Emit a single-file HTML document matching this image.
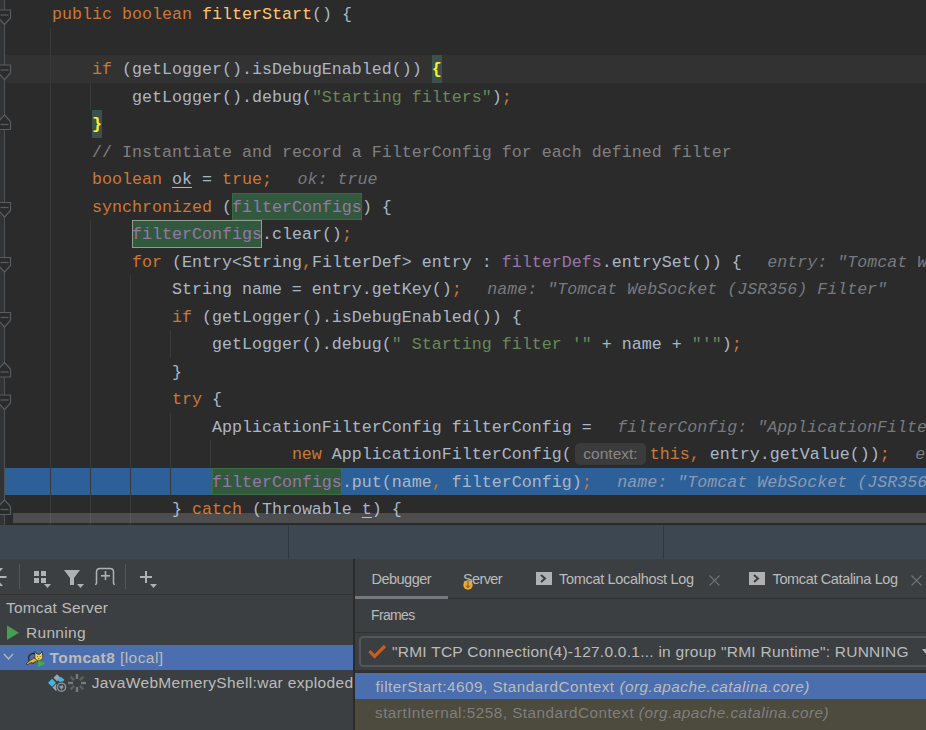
<!DOCTYPE html>
<html><head><meta charset="utf-8">
<style>
*{margin:0;padding:0;box-sizing:border-box}
html,body{width:926px;height:730px;overflow:hidden;background:#2b2b2b}
body{position:relative;font-family:"Liberation Sans",sans-serif}
.abs{position:absolute}
#ed{position:absolute;left:0;top:0;width:926px;height:525px;background:#2b2b2b;overflow:hidden}
.ln{position:absolute;left:12px;height:27.5px;line-height:27.5px;white-space:pre;font-family:"Liberation Mono",monospace;font-size:16.667px;color:#a9b7c6;padding-top:1.2px}
.k{color:#cc7832}
.s{color:#6a8759}
.c{color:#808080}
.f{color:#9876aa}
.y{color:#ffc66d}
.u{text-decoration:underline;text-underline-offset:3px}
.bm{color:#ffef28;font-weight:bold}
.h{color:#767a7f;font-style:italic;margin-left:25.5px}
.pbox{position:absolute;line-height:21.5px;text-align:center;background:#3b3b3b;border-radius:5px;font-family:"Liberation Sans",sans-serif;font-size:15.5px;color:#878787}
.gap{display:inline-block;width:78px}
.tree{position:absolute;height:25px;line-height:25px;font-size:15px;color:#bbbbbb;white-space:pre}
.tab{position:absolute;top:565px;height:28px;line-height:28px;font-size:14.5px;color:#bbbbbb;white-space:pre}
.frm{position:absolute;height:26px;line-height:26px;font-size:15px;white-space:pre}
.ig{position:absolute;width:1px;background:#393939}
</style></head><body>
<div id="ed">
<div class="abs" style="left:0;top:0;width:4px;height:525px;background:#313335"></div>
<div class="abs" style="left:5px;top:55px;width:921px;height:27.5px;background:#323232"></div>
<div class="abs" style="left:5px;top:467.5px;width:921px;height:27.5px;background:#2d6099"></div>
<div class="ig" style="left:50px;top:27.5px;height:500.5px"></div>
<div class="ig" style="left:90px;top:82.5px;height:27.5px"></div>
<div class="ig" style="left:90px;top:220.0px;height:308.0px"></div>
<div class="ig" style="left:130px;top:275.0px;height:252.99999999999997px"></div>
<div class="ig" style="left:170px;top:330.0px;height:27.5px"></div>
<div class="ig" style="left:170px;top:412.5px;height:82.5px"></div>
<div class="ig" style="left:210px;top:440.0px;height:27.5px"></div>
<div class="abs" style="left:432px;top:55.0px;width:10px;height:27.5px;background:#3b514d"></div>
<div class="abs" style="left:92px;top:110.0px;width:10px;height:27.5px;background:#3b514d"></div>
<div class="abs" style="left:232px;top:192.5px;width:130px;height:27.5px;background:#32593d;border:1px solid #3a6843"></div>
<div class="abs" style="left:132px;top:220.0px;width:130px;height:27.5px;background:#32593d;border:1px solid #8fa08f"></div>
<div class="abs" style="left:212px;top:467.5px;width:130px;height:27.5px;background:#32593d;border:1px solid #3a7040"></div>
<div class="pbox" style="left:575px;top:443px;width:71px;height:21.5px">context:</div>
<div class="abs" style="left:4px;top:0;width:1px;height:525px;background:#4f5152"></div>
<svg class="abs" style="left:0;top:0" width="14" height="525" viewBox="0 0 14 525"><path d="M-1.5 10.0 L10.5 10.0 L10.5 18.0 L4.5 24.5 L-1.5 18.0 Z" fill="#2b2b2b" stroke="#5a5d5f" stroke-width="1.2"/><path d="M0.5 15.0 L8.5 15.0" stroke="#5a5d5f" stroke-width="1.2"/><path d="M-1.5 65.0 L10.5 65.0 L10.5 73.0 L4.5 79.5 L-1.5 73.0 Z" fill="#2b2b2b" stroke="#5a5d5f" stroke-width="1.2"/><path d="M0.5 70.0 L8.5 70.0" stroke="#5a5d5f" stroke-width="1.2"/><path d="M-1.5 202.5 L10.5 202.5 L10.5 210.5 L4.5 217.0 L-1.5 210.5 Z" fill="#2b2b2b" stroke="#5a5d5f" stroke-width="1.2"/><path d="M0.5 207.5 L8.5 207.5" stroke="#5a5d5f" stroke-width="1.2"/><path d="M-1.5 257.5 L10.5 257.5 L10.5 265.5 L4.5 272.0 L-1.5 265.5 Z" fill="#2b2b2b" stroke="#5a5d5f" stroke-width="1.2"/><path d="M0.5 262.5 L8.5 262.5" stroke="#5a5d5f" stroke-width="1.2"/><path d="M-1.5 312.5 L10.5 312.5 L10.5 320.5 L4.5 327.0 L-1.5 320.5 Z" fill="#2b2b2b" stroke="#5a5d5f" stroke-width="1.2"/><path d="M0.5 317.5 L8.5 317.5" stroke="#5a5d5f" stroke-width="1.2"/><path d="M-1.5 395.0 L10.5 395.0 L10.5 403.0 L4.5 409.5 L-1.5 403.0 Z" fill="#2b2b2b" stroke="#5a5d5f" stroke-width="1.2"/><path d="M0.5 400.0 L8.5 400.0" stroke="#5a5d5f" stroke-width="1.2"/><path d="M-1.5 129.5 L10.5 129.5 L10.5 121.5 L4.5 115.0 L-1.5 121.5 Z" fill="#2b2b2b" stroke="#5a5d5f" stroke-width="1.2"/><path d="M0.5 124.5 L8.5 124.5" stroke="#5a5d5f" stroke-width="1.2"/><path d="M-1.5 377.0 L10.5 377.0 L10.5 369.0 L4.5 362.5 L-1.5 369.0 Z" fill="#2b2b2b" stroke="#5a5d5f" stroke-width="1.2"/><path d="M0.5 372.0 L8.5 372.0" stroke="#5a5d5f" stroke-width="1.2"/><path d="M-1.5 514.5 L10.5 514.5 L10.5 506.5 L4.5 500.0 L-1.5 506.5 Z" fill="#2b2b2b" stroke="#5a5d5f" stroke-width="1.2"/><path d="M0.5 509.5 L8.5 509.5" stroke="#5a5d5f" stroke-width="1.2"/></svg>

<div class="ln" style="top:0.0px">    <span class="k">public</span> <span class="k">boolean</span> <span class="y">filterStart</span>() {</div>
<div class="ln" style="top:55.0px">        <span class="k">if</span> (getLogger().isDebugEnabled()) <span class="bm">{</span></div>
<div class="ln" style="top:82.5px">            getLogger().debug(<span class="s">&quot;Starting filters&quot;</span>)<span class="k">;</span></div>
<div class="ln" style="top:110.0px">        <span class="bm">}</span></div>
<div class="ln" style="top:137.5px">        <span class="c">// Instantiate and record a FilterConfig for each defined filter</span></div>
<div class="ln" style="top:165.0px">        <span class="k">boolean</span> <span class="u">ok</span> = <span class="k">true;</span><span class="h">ok: true</span></div>
<div class="ln" style="top:192.5px">        <span class="k">synchronized</span> (<span class="f">filterConfigs</span>) {</div>
<div class="ln" style="top:220.0px">            <span class="f">filterConfigs</span>.clear()<span class="k">;</span></div>
<div class="ln" style="top:247.5px">            <span class="k">for</span> (Entry&lt;String<span class="k">,</span>FilterDef&gt; entry : <span class="f">filterDefs</span>.entrySet()) {<span class="h">entry: &quot;Tomcat WebSocket (JSR356) Filter&quot;</span></div>
<div class="ln" style="top:275.0px">                String name = entry.getKey()<span class="k">;</span><span class="h">name: &quot;Tomcat WebSocket (JSR356) Filter&quot;</span></div>
<div class="ln" style="top:302.5px">                <span class="k">if</span> (getLogger().isDebugEnabled()) {</div>
<div class="ln" style="top:330.0px">                    getLogger().debug(<span class="s">&quot; Starting filter &#39;&quot;</span> + name + <span class="s">&quot;&#39;&quot;</span>)<span class="k">;</span></div>
<div class="ln" style="top:357.5px">                }</div>
<div class="ln" style="top:385.0px">                <span class="k">try</span> {</div>
<div class="ln" style="top:412.5px">                    ApplicationFilterConfig filterConfig =<span class="h">filterConfig: &quot;ApplicationFilterConfig[name=Tomcat]&quot;</span></div>
<div class="ln" style="top:440.0px">                            <span class="k">new</span> ApplicationFilterConfig(<span class="gap"></span><span class="k">this,</span> entry.getValue())<span class="k">;</span><span class="h">entry: &quot;Tomcat&quot;</span></div>
<div class="ln" style="top:467.5px">                    <span class="f">filterConfigs</span>.put(name<span class="k">,</span> filterConfig)<span class="k">;</span><span class="h" style="color:#8a9ab0">name: &quot;Tomcat WebSocket (JSR356) Filter&quot;</span></div>
<div class="ln" style="top:495.0px">                } <span class="k">catch</span> (Throwable <span class="u">t</span>) {</div>
<div class="abs" style="left:13px;top:513px;width:913px;height:10px;background:rgba(255,255,255,0.165)"></div>
</div>

<!-- band -->
<div class="abs" style="left:0;top:525px;width:926px;height:34px;background:#3c4752"></div>
<div class="abs" style="left:288px;top:525px;width:1px;height:34px;background:#2f3840"></div>
<div class="abs" style="left:663px;top:525px;width:1px;height:34px;background:#2f3840"></div>

<!-- left panel -->
<div class="abs" style="left:0;top:559px;width:353px;height:171px;background:#3c3f41"></div>
<div class="abs" style="left:0;top:594px;width:353px;height:1px;background:#323232"></div>
<div class="abs" style="left:353px;top:559px;width:2px;height:171px;background:#2b2b2b"></div>
<!-- toolbar icons -->
<svg class="abs" style="left:0;top:559px" width="353" height="35" viewBox="0 0 353 35">
  <g fill="#afb1b3">
    <rect x="0" y="17" width="6.5" height="2"/>
    <path d="M-4 9 L3 9 L-0.5 13 Z"/>
    <path d="M-4 27 L3 27 L-0.5 23 Z"/>
    <rect x="34" y="12" width="5" height="5"/><rect x="41" y="12" width="5" height="5"/>
    <rect x="34" y="19" width="5" height="5"/><rect x="41" y="19" width="5" height="5"/>
    <path d="M44 25 L51 25 L47.5 29 Z"/>
    <path d="M64 11 L80 11 L74 19 L74 26 L70 26 L70 19 Z"/>
    <path d="M77 25 L84 25 L80.5 29 Z"/>
    <rect x="140" y="17" width="12" height="2"/><rect x="145" y="12" width="2" height="12"/>
    <path d="M150 25 L157 25 L153.5 29 Z"/>
  </g>
  <g fill="none" stroke="#afb1b3" stroke-width="1.5">
    <path d="M95.5 26 L96.5 24 L96.5 13 Q96.5 9.5 100 9.5 L110 9.5 Q113.5 9.5 113.5 13 L113.5 24 L114.5 26"/>
  </g>
  <g fill="#afb1b3"><rect x="101" y="16" width="9" height="1.6"/><rect x="104.7" y="12" width="1.6" height="9"/></g>
  <rect x="19" y="5" width="1" height="25" fill="#555759"/>
  <rect x="125" y="5" width="1" height="25" fill="#555759"/>
</svg>
<div class="abs" style="left:0;top:645px;width:353px;height:25px;background:#4b6eaf"></div>
<div class="tree" id="t_ts" style="left:6.0px;top:595px;font-size:15.5px;letter-spacing:0.167px">Tomcat Server</div>
<svg class="abs" style="left:7px;top:625px" width="13" height="16"><path d="M0 0.5 L12 7.7 L0 15 Z" fill="#499c54"/></svg>
<div class="tree" id="t_run" style="left:26.0px;top:620px;font-size:15.5px;letter-spacing:0.3px">Running</div>
<svg class="abs" style="left:3px;top:652px" width="12" height="10"><path d="M1 2 L5.5 7 L10 2" fill="none" stroke="#b4b8bc" stroke-width="1.3"/></svg>
<svg class="abs" style="left:24px;top:649px" width="24" height="20" viewBox="24 649 24 20">
  <path d="M29 661 Q27.5 655 32 653.5 Q34 653 35 654" fill="none" stroke="#1e1e1e" stroke-width="1.1"/>
  <path d="M38.5 657.5 Q33 657.5 30 660.5 L26 663.8 L27.5 664.6 Q30 663 32 662.5 L33 664 L34 662 Q37 662 39 661 Z" fill="#eab52a" stroke="#1e1e1e" stroke-width="0.7"/>
  <path d="M35 651.5 L37.2 654.2 L40 654.2 L42.3 651.5 L42.8 657.5 Q42 660.8 38.7 660.8 Q35.5 660.8 34.8 657.5 Z" fill="#f4cf55" stroke="#1e1e1e" stroke-width="0.7"/>
  <path d="M37 656.5 L37.8 656.5 M39.8 656.5 L40.6 656.5 M38.2 658.8 L39.4 658.8" stroke="#1e1e1e" stroke-width="0.8"/>
  <path d="M38 659.8 L45.3 663.5 L38 667.2 Z" fill="#3fae49"/>
</svg>
<div class="tree" id="t_t8" style="left:49.5px;top:645px;font-size:15.5px;letter-spacing:0.443px"><b>Tomcat8</b> [local]</div>
<svg class="abs" style="left:46px;top:672px" width="42" height="23" viewBox="46 672 42 23">
  <path d="M53.5 677.8 L57 674.3 L60.5 677.8 L57 681.3 Z" fill="#9aa7b0"/>
  <path d="M48 682.7 L52 678.7 L56 682.7 L52 686.7 Z" fill="#40b6e0"/>
  <path d="M57.5 680 L61 676.8 L64.5 680 L61 683.2 Z" fill="#40b6e0"/>
  <path d="M52.5 687.5 L56 684 L59.5 687.5 L56 691 Z" fill="#9aa7b0"/>
  <circle cx="61.5" cy="687.2" r="5.6" fill="#3c3f41"/>
  <circle cx="61.5" cy="687.2" r="4.8" fill="#8e9aa2"/>
  <circle cx="61.5" cy="687.2" r="3.4" fill="#3c3f41"/>
  <path d="M59 686.8 L62.5 684.8 L63.5 687.5 L61.5 689.8 Z" fill="#8e9aa2"/>
  <g stroke-width="2.4" stroke-linecap="butt">
    <path d="M77 674 L77 679" stroke="#77797b"/>
    <path d="M83.4 676.6 L79.9 680.1" stroke="#5d6062"/>
    <path d="M86 683 L81 683" stroke="#77797b"/>
    <path d="M83.4 689.4 L79.9 685.9" stroke="#5d6062"/>
    <path d="M77 692 L77 687" stroke="#77797b"/>
    <path d="M70.6 689.4 L74.1 685.9" stroke="#5d6062"/>
    <path d="M68 683 L73 683" stroke="#77797b"/>
    <path d="M70.6 676.6 L74.1 680.1" stroke="#5d6062"/>
  </g>
</svg>
<div class="tree" id="t_java" style="left:91.7px;top:669.5px;width:261.3px;overflow:hidden;font-size:15.5px;letter-spacing:0.335px">JavaWebMemeryShell:war exploded</div>

<!-- right panel -->
<div class="abs" style="left:355px;top:559px;width:571px;height:171px;background:#3c3f41"></div>
<div class="abs" style="left:355px;top:598px;width:571px;height:1px;background:#323232"></div>
<div class="abs" style="left:355px;top:596px;width:93px;height:3px;background:#747a80"></div>
<div class="tab" id="t_dbg" style="left:371.5px;font-size:14.5px;letter-spacing:-0.515px">Debugger</div>
<div class="tab" id="t_srv" style="left:463.0px;font-size:14.5px;letter-spacing:-0.64px">Server</div>
<svg class="abs" style="left:461.6px;top:578.8px" width="12" height="12"><circle cx="6" cy="6" r="4.7" fill="#eeaa35"/><path d="M6 2.2 L6 8.5 M3.8 6.5 L6 8.7 L8.2 6.5" fill="none" stroke="#5a4a2a" stroke-width="0.9"/></svg>
<svg class="abs" style="left:536px;top:572px" width="16" height="13"><rect width="16" height="13" fill="#afb1b3"/><path d="M5 3 L9 6.5 L5 10" fill="none" stroke="#3c3f41" stroke-width="2"/></svg>
<div class="tab" id="t_loc" style="left:559.0px;font-size:14.5px;letter-spacing:-0.316px">Tomcat Localhost Log</div>
<svg class="abs" style="left:709px;top:575px" width="11" height="11"><path d="M0.5 0.5 L10.5 10.5 M10.5 0.5 L0.5 10.5" stroke="#6e7072" stroke-width="1.2"/></svg>
<svg class="abs" style="left:749px;top:572px" width="16" height="13"><rect width="16" height="13" fill="#afb1b3"/><path d="M5 3 L9 6.5 L5 10" fill="none" stroke="#3c3f41" stroke-width="2"/></svg>
<div class="tab" id="t_cat" style="left:772.5px;font-size:14.5px;letter-spacing:-0.365px">Tomcat Catalina Log</div>
<svg class="abs" style="left:911px;top:575px" width="11" height="11"><path d="M0.5 0.5 L10.5 10.5 M10.5 0.5 L0.5 10.5" stroke="#6e7072" stroke-width="1.2"/></svg>

<div class="tab" id="t_frm" style="left:371.0px;top:601.3px;font-size:14px;letter-spacing:-0.64px">Frames</div>
<div class="abs" style="left:355px;top:632px;width:571px;height:1px;background:#323232"></div>
<div class="abs" style="left:358.5px;top:636px;width:580px;height:31px;border:2px solid #545759;border-radius:4.5px;background:#3c3f41"></div>
<svg class="abs" style="left:367px;top:643px" width="20" height="17"><path d="M2.5 8 L7.5 13.5 L18 3" fill="none" stroke="#c25e28" stroke-width="3.2"/></svg>
<div class="tree" id="t_rmi" style="left:392.0px;top:639px;font-size:15.5px;letter-spacing:0.251px">"RMI TCP Connection(4)-127.0.0.1... in group "RMI Runtime": RUNNING</div>
<svg class="abs" style="left:922px;top:649px" width="8" height="6"><path d="M0 0 L8 0 L4 5 Z" fill="#afb1b3"/></svg>
<div class="abs" style="left:355px;top:670px;width:571px;height:2.5px;background:#323232"></div>
<div class="abs" style="left:355px;top:672.5px;width:571px;height:26px;background:#4b6eaf"></div>
<div class="abs" style="left:355px;top:698.5px;width:571px;height:31.5px;background:#4d4a3e"></div>
<div class="frm" id="t_r1" style="left:375.5px;top:674px;color:#bbbbbb;font-size:15.3px;letter-spacing:0.495px">filterStart:4609, StandardContext <i>(org.apache.catalina.core)</i></div>
<div class="frm" id="t_r2" style="left:375.0px;top:700px;color:#7f7f7f;font-size:15.3px;letter-spacing:0.479px">startInternal:5258, StandardContext <i>(org.apache.catalina.core)</i></div>
</body></html>
